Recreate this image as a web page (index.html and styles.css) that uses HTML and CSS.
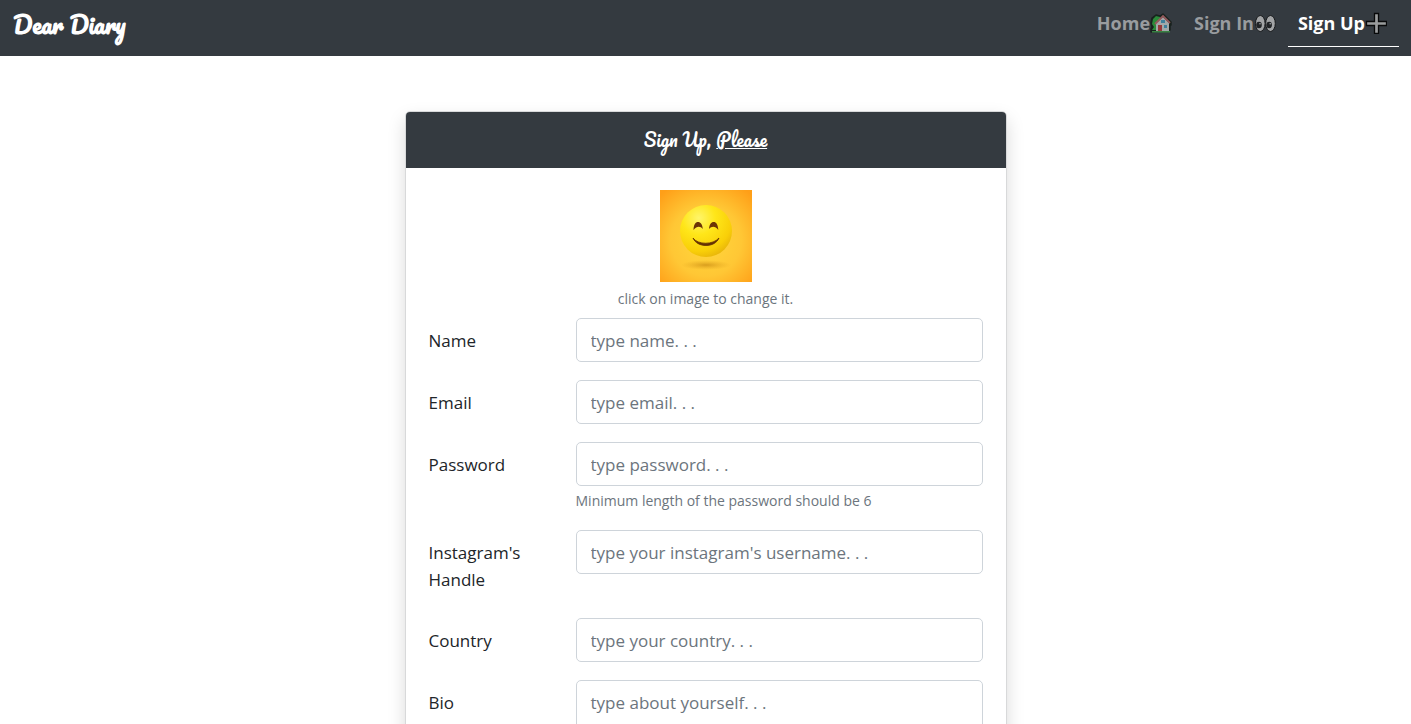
FILE: index.html
```html
<!DOCTYPE html>
<html lang="en">
<head>
<meta charset="utf-8">
<meta name="viewport" content="width=device-width, initial-scale=1">
<title>Dear Diary</title>
<link rel="stylesheet" href="styles.css">
</head>
<body>
<header class="navbar">
  <a class="brand" href="#">Dear Diary</a>
  <nav class="nav">
    <a class="nav-link" href="#">Home<svg class="nav-icon" viewBox="0 0 22 22" aria-hidden="true">
      <path d="M1 20v-3l1-2-1-4 1-5 4-3 4 1 3-2 8 8v3l-1 1v4z" fill="#18221e" stroke="#18221e" stroke-width="1.500" stroke-linejoin="round"/>
      <path d="M2 18l2-3-2-3 1-5 3-3 4 1 1 2-5 5v6z" fill="#2b8a3a"/>
      <path d="M6 19v-8l7-6 6 6v8z" fill="#a2a8aa"/>
      <path d="M5 12l8-8 7 7" fill="none" stroke="#93595c" stroke-width="1.800"/>
      <path d="M11 8h4v3h-4zM14 13h3v3h-3z" fill="#3e7f9c"/>
      <path d="M8 13h4v6H8z" fill="#963a3c"/>
      <path d="M2 19h18v1.500H2z" fill="#388242"/>
    </svg></a>
    <a class="nav-link" href="#">Sign In<svg class="nav-icon" viewBox="0 0 22 22" aria-hidden="true">
      <g fill="#a2a4a6" stroke="#17191b" stroke-width="1"><ellipse cx="6.3" cy="11.500" rx="4.800" ry="8"/><ellipse cx="16.5" cy="11.500" rx="4.800" ry="8"/></g>
      <g fill="#202326"><ellipse cx="5" cy="13" rx="2.800" ry="3.300"/><ellipse cx="15.2" cy="13" rx="2.800" ry="3.300"/></g>
      <circle cx="6" cy="11.800" r=".8" fill="#a2a4a6"/><circle cx="16.2" cy="11.800" r=".8" fill="#a2a4a6"/>
    </svg></a>
    <a class="nav-link active" href="#" aria-current="page">Sign Up<svg class="nav-icon" viewBox="0 0 22 22" aria-hidden="true">
      <path d="M9.500 1.500h4v8h8v4h-8v8h-4v-8h-8v-4h8z" fill="#9a9c9d" stroke="#08090a" stroke-width="1.300"/>
    </svg></a>
  </nav>
</header>
<main class="page">
  <section class="card">
    <h1 class="card-header">Sign Up, <u>Please</u></h1>
    <form class="card-body">
      <button class="avatar" type="button" aria-label="Change profile image">
        <svg class="avatar-image" viewBox="0 0 92 92" aria-hidden="true">
          <defs>
            <radialGradient id="backdrop" cx=".5" cy=".55" r=".7"><stop offset="0" stop-color="#ffd83c"/><stop offset=".55" stop-color="#ffc735"/><stop offset="1" stop-color="#ff9f18"/></radialGradient>
            <radialGradient id="face" cx=".36" cy=".25" r=".8"><stop offset="0" stop-color="#fff56a"/><stop offset=".4" stop-color="#ffe619"/><stop offset=".8" stop-color="#f9cf08"/><stop offset="1" stop-color="#e8b40a"/></radialGradient>
            <radialGradient id="shadow"><stop offset="0" stop-color="#b97809" stop-opacity=".55"/><stop offset="1" stop-color="#d99618" stop-opacity="0"/></radialGradient>
          </defs>
          <path d="M0 0h92v92H0z" fill="url(#backdrop)"/>
          <ellipse cx="46" cy="75" rx="25" ry="5" fill="url(#shadow)"/>
          <circle cx="46" cy="41" r="26" fill="url(#face)"/>
          <path d="M33.500 40c.2-5.500 2-8 4.500-8s4.500 2.500 4.800 7c-2.500-3-6-3-9.300 1zM49 39c.3-4.500 2.200-7 4.700-7s4.300 2.500 4.600 8c-3-4-6.500-4-9.300-1z" fill="#6b3406"/>
          <path d="M33 48c5 7 20 7 26 0-4 10-22 10-26 0z" fill="#653004" stroke="#653004" stroke-width=".8" stroke-linejoin="round"/>
        </svg>
      </button>
      <p class="avatar-hint">click on image to change it.</p>
      <div class="row">
        <label class="label" for="name">Name</label>
        <div class="field"><input class="control" id="name" type="text" placeholder="type name. . ."></div>
      </div>
      <div class="row">
        <label class="label" for="email">Email</label>
        <div class="field"><input class="control" id="email" type="email" placeholder="type email. . ."></div>
      </div>
      <div class="row">
        <label class="label" for="password">Password</label>
        <div class="field">
          <input class="control" id="password" type="password" placeholder="type password. . ." aria-describedby="password-hint">
          <p class="hint" id="password-hint">Minimum length of the password should be 6</p>
        </div>
      </div>
      <div class="row">
        <label class="label" for="instagram">Instagram's Handle</label>
        <div class="field"><input class="control" id="instagram" type="text" placeholder="type your instagram's username. . ."></div>
      </div>
      <div class="row">
        <label class="label" for="country">Country</label>
        <div class="field"><input class="control" id="country" type="text" placeholder="type your country. . ."></div>
      </div>
      <div class="row">
        <label class="label" for="bio">Bio</label>
        <div class="field"><textarea class="control bio" id="bio" rows="3" placeholder="type about yourself. . ."></textarea></div>
      </div>
    </form>
  </section>
</main>
</body>
</html>
```
FILE: styles.css
```css
*, *::before, *::after { box-sizing: border-box; }

html { scrollbar-width: none; }

body {
  margin: 0;
  background: #fff;
  color: #212529;
  font-family: "Segoe UI", "Open Sans", "Noto Sans", sans-serif;
  font-size: 17px;
  line-height: 27px;
}

.navbar {
  display: flex;
  align-items: center;
  justify-content: space-between;
  min-height: 56px;
  padding: 0 12px 0 13px;
  background: #343a40;
}

.brand {
  color: #fff;
  font-family: Pacifico, Lato, sans-serif;
  font-size: 23px;
  font-weight: 700;
  line-height: 32px;
  padding-bottom: 8px;
  text-decoration: none;
}

.nav { display: flex; }

.nav-link {
  display: flex;
  align-items: center;
  padding: 0 12px 9px 10px;
  border-bottom: 1px solid transparent;
  color: #999c9f;
  font-size: 18px;
  font-weight: 700;
  text-decoration: none;
}

.nav-link.active { color: #fff; border-color: #fff; }

.nav-icon { width: 22px; height: 22px; }

.page { padding: 55px 16px; }

.card {
  max-width: 602px;
  margin: 0 auto;
  border: 1px solid #d8d9da;
  border-radius: 5px;
  background: #fff;
  box-shadow: 0 8px 18px rgba(0, 0, 0, .15);
}

.card-header {
  margin: 0;
  padding: 12px 22px;
  border-radius: 4px 4px 0 0;
  background: #343a40;
  color: #fff;
  font-family: Pacifico, Lato, sans-serif;
  font-size: 18px;
  font-weight: 400;
  line-height: 32px;
  text-align: center;
}

.card-body {
  display: flex;
  flex-direction: column;
  gap: 18px;
  padding: 22px 23px;
}

.avatar {
  align-self: center;
  padding: 0;
  border: 0;
  background: none;
  cursor: pointer;
}

.avatar-image { display: block; width: 92px; height: 92px; }

.avatar-hint, .hint {
  margin: 0;
  color: #6c757d;
  font-size: 14px;
  line-height: 22px;
}

.avatar-hint { margin: -12px 0 -10px; text-align: center; }

.row {
  display: grid;
  grid-template-columns: 117px 1fr;
  column-gap: 30px;
}

.label { padding: 9px 0 7px; }

.control {
  display: block;
  width: 100%;
  height: 44px;
  padding: 8px 14px;
  border: 1px solid #ced4da;
  border-radius: 5px;
  background: #fff;
  color: #495057;
  font: inherit;
}

.control::placeholder { color: #6c757d; opacity: 1; }

.bio { height: auto; resize: none; }

.hint { margin-top: 4px; }
```
